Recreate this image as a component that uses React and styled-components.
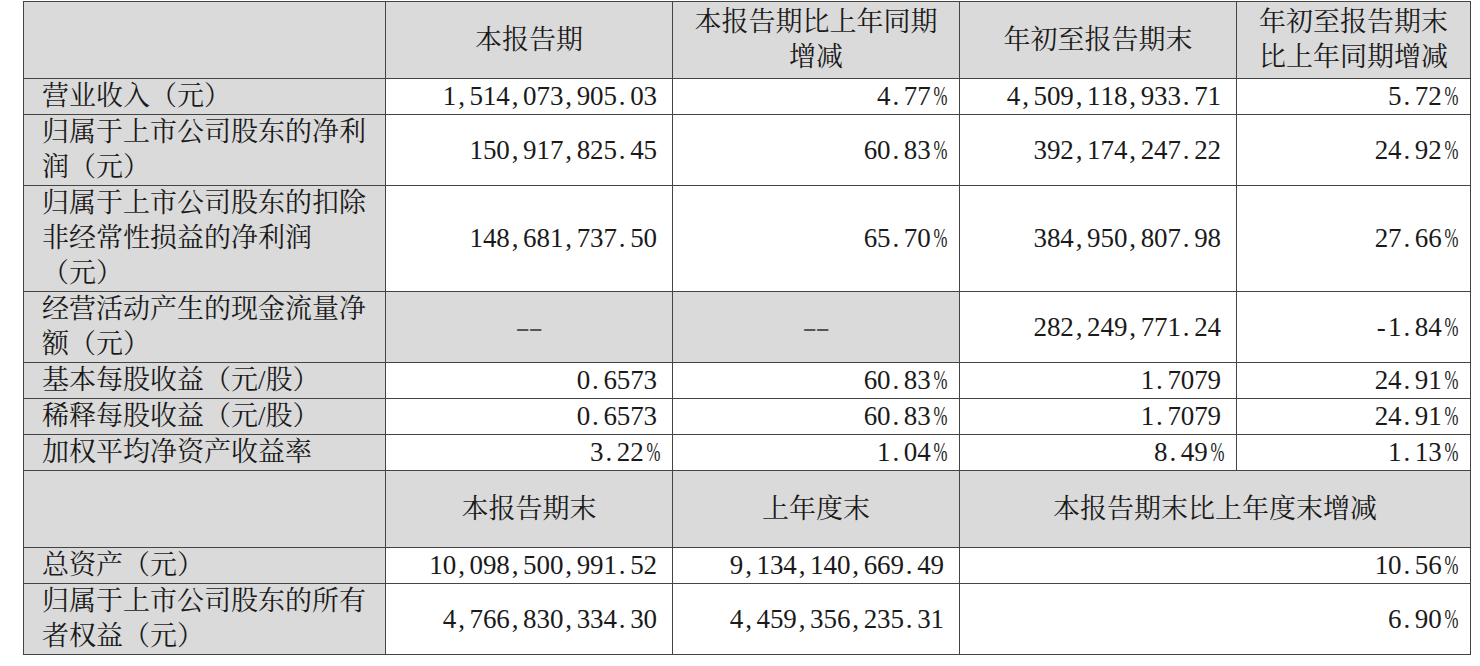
import React from 'react';
import styled, { createGlobalStyle } from 'styled-components';

const GlobalStyle = createGlobalStyle`
  html, body {
    margin: 0;
    padding: 0;
    background: #ffffff;
  }
  body {
    font-family: "Liberation Serif", "Noto Serif CJK SC", "Noto Sans CJK SC", serif;
    color: #1a1a1a;
  }
`;

const Page = styled.div`
  padding: 1px 0 0 23px;
`;

const Table = styled.table`
  border-collapse: collapse;
  table-layout: fixed;
  width: 1447px;
  font-size: 27px;
  line-height: 35px;
`;

const Cell = styled.td`
  border: 1px solid #444;
  padding: 0 ${p => (p.$align === 'right' ? '15px' : '18px')} 0 18px;
  vertical-align: middle;
  text-align: ${p => p.$align || 'left'};
  background: ${p => (p.$gray ? '#dadada' : '#ffffff')};
  height: ${p => (p.$head ? '76px' : 'auto')};
  white-space: ${p => (p.$nowrap ? 'nowrap' : 'normal')};
`;

// half-width fixed cell per character, like a Song typeface's ASCII glyphs
const Glyph = styled.span`
  display: inline-block;
  width: 13.4px;
  text-align: ${p => (p.$punct ? 'left' : 'center')};
  padding-left: ${p => (p.$punct ? '2px' : '0')};
  box-sizing: border-box;
  color: ${p => (p.$muted ? '#555' : 'inherit')};
  transform: ${p => (p.$squeeze ? `scaleX(${p.$squeeze})` : 'none')};
`;

const Num = ({ text, empty }) => (
  <>
    {text.split('').map((ch, i) => (
      <Glyph
        key={i}
        $punct={ch === ',' || ch === '.'}
        $muted={empty}
        $squeeze={ch === '%' ? 0.62 : empty ? 1.6 : null}
      >
        {ch}
      </Glyph>
    ))}
  </>
);

const topHead = ['本报告期', '本报告期比上年同期增减', '年初至报告期末', '年初至报告期末比上年同期增减'];

const topRows = [
  { label: '营业收入（元）', values: ['1,514,073,905.03', '4.77%', '4,509,118,933.71', '5.72%'] },
  { label: '归属于上市公司股东的净利润（元）', values: ['150,917,825.45', '60.83%', '392,174,247.22', '24.92%'] },
  { label: '归属于上市公司股东的扣除非经常性损益的净利润（元）', values: ['148,681,737.50', '65.70%', '384,950,807.98', '27.66%'] },
  { label: '经营活动产生的现金流量净额（元）', values: [null, null, '282,249,771.24', '-1.84%'] },
  { label: '基本每股收益（元/股）', values: ['0.6573', '60.83%', '1.7079', '24.91%'] },
  { label: '稀释每股收益（元/股）', values: ['0.6573', '60.83%', '1.7079', '24.91%'] },
  { label: '加权平均净资产收益率', values: ['3.22%', '1.04%', '8.49%', '1.13%'] },
];

const bottomRows = [
  { label: '总资产（元）', values: ['10,098,500,991.52', '9,134,140,669.49', '10.56%'] },
  { label: '归属于上市公司股东的所有者权益（元）', values: ['4,766,830,334.30', '4,459,356,235.31', '6.90%'] },
];

export default function App() {
  return (
    <>
      <GlobalStyle />
      <Page>
        <Table>
          <colgroup>
            <col style={{ width: 362 }} />
            <col style={{ width: 287 }} />
            <col style={{ width: 287 }} />
            <col style={{ width: 277 }} />
            <col style={{ width: 234 }} />
          </colgroup>
          <tbody>
            <tr>
              <Cell $gray $head />
              {topHead.map(h => (
                <Cell key={h} $gray $head $align="center">{h}</Cell>
              ))}
            </tr>
            {topRows.map(row => (
              <tr key={row.label}>
                <Cell $gray>{row.label}</Cell>
                {row.values.map((v, i) =>
                  v === null ? (
                    <Cell key={i} $gray $align="center"><Num text="--" empty /></Cell>
                  ) : (
                    <Cell key={i} $align="right" $nowrap><Num text={v} /></Cell>
                  )
                )}
              </tr>
            ))}
            <tr>
              <Cell $gray $head />
              <Cell $gray $head $align="center">本报告期末</Cell>
              <Cell $gray $head $align="center">上年度末</Cell>
              <Cell $gray $head $align="center" colSpan={2}>本报告期末比上年度末增减</Cell>
            </tr>
            {bottomRows.map(row => (
              <tr key={row.label}>
                <Cell $gray>{row.label}</Cell>
                <Cell $align="right" $nowrap><Num text={row.values[0]} /></Cell>
                <Cell $align="right" $nowrap><Num text={row.values[1]} /></Cell>
                <Cell $align="right" $nowrap colSpan={2}><Num text={row.values[2]} /></Cell>
              </tr>
            ))}
          </tbody>
        </Table>
      </Page>
    </>
  );
}
